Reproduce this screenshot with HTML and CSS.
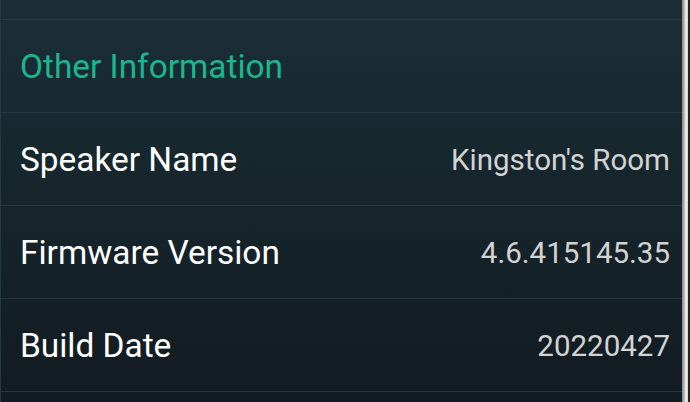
FILE: index.html
```html
<!DOCTYPE html>
<html lang="en">
<head>
    <meta charset="UTF-8">
    <meta name="viewport" content="width=device-width, initial-scale=1.0">
    <title>Other Information</title>
    <link rel="stylesheet" href="styles.css">
</head>
<body>

    <div class="screen">
        <div class="list">
            <div class="row section">
                <span class="section-title">Other Information</span>
            </div>
            <div class="row">
                <span class="label">Speaker Name</span>
                <span class="value">Kingston's Room</span>
            </div>
            <div class="row">
                <span class="label">Firmware Version</span>
                <span class="value">4.6.415145.35</span>
            </div>
            <div class="row">
                <span class="label">Build Date</span>
                <span class="value">20220427</span>
            </div>
        </div>
        <div class="edge"></div>
    </div>

</body>
</html>
```

FILE: styles.css
```css
html, body {
    margin: 0;
    height: 100%;
}
body {
    font-family: Roboto, "Noto Sans", sans-serif;
    background: linear-gradient(180deg, #1b2e36 0%, #16252c 50%, #121b21 100%);
    overflow: hidden;
}
.screen {
    display: flex;
    height: 402px;
}
.list {
    flex: 1;
    padding-top: 19px;
    border-left: 1px solid #223a40;
}
.row {
    display: flex;
    justify-content: space-between;
    align-items: center;
    height: 92px;
    padding: 0 12px 0 19px;
    border-top: 1px solid #253a40;
    font-size: 33.4px;
}
.row:last-child {
    border-bottom: 1px solid #253a40;
}
.section-title {
    color: #1cb68e;
}
.label {
    color: #ffffff;
}
.value {
    color: #d3d3d3;
    font-size: 29.5px;
    padding-top: 2px;
}
.edge {
    width: 8px;
    background: linear-gradient(90deg, #8c8c8c 0px, #a8a8a8 2px, #dcdcdc 3px, #f2f2f2 5px, #bdbdbd 6px, #2a2a2a 6px, #1a1a1a 8px);
}
```
